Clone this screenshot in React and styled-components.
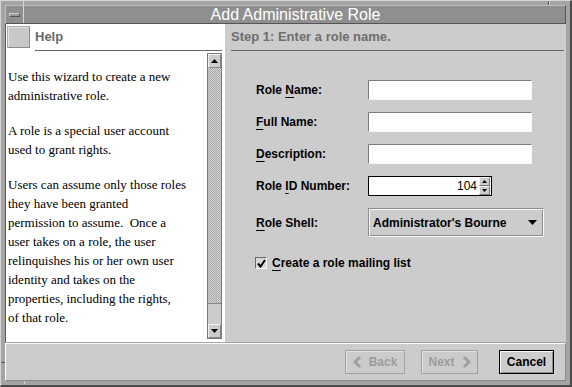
import React from "react";
import styled, { createGlobalStyle } from "styled-components";

const GlobalStyle = createGlobalStyle`
  html, body { margin: 0; padding: 0; background: #a4a4a4; }
  * { box-sizing: border-box; }
`;

const Window = styled.div`
  position: relative;
  width: 572px;
  height: 387px;
  display: flex;
  flex-direction: column;
  background: #a4a4a4;
  border-style: solid;
  border-width: 1px 2px 2px 1px;
  border-color: #d6d6d6 #4a4a4a #4a4a4a #d6d6d6;
  padding: 4px;
  font-family: "Liberation Sans", Arial, sans-serif;
`;

const Notch = styled.div`
  position: absolute;
  background: ${(p) => p.$c || "#d6d6d6"};
  left: ${(p) => p.$x}px;
  top: ${(p) => p.$y}px;
  width: ${(p) => p.$w}px;
  height: ${(p) => p.$h}px;
`;

const TitleBar = styled.div`
  height: 19px;
  display: flex;
  background: #8f8f8f;
  border-style: solid;
  border-width: 1px;
  border-color: #bdbdbd #555 #555 #bdbdbd;
`;

const MinButton = styled.div`
  width: 18px;
  display: flex;
  align-items: center;
  justify-content: center;
  border-right: 1px solid #c4c4c4;
`;

const MinBar = styled.div`
  width: 11px;
  height: 4px;
  background: #9a9a9a;
  border-style: solid;
  border-width: 1px;
  border-color: #d0d0d0 #555 #555 #d0d0d0;
`;

const TitleText = styled.div`
  flex: 1;
  text-align: center;
  color: #fff;
  font-size: 16px;
  line-height: 17px;
  padding-left: 2px;
`;

const Body = styled.div`
  flex: 1;
  display: flex;
  flex-direction: column;
  min-height: 0;
`;

const Main = styled.div`
  flex: 1;
  display: flex;
  min-height: 0;
`;

const HelpPane = styled.div`
  width: 220px;
  display: flex;
  flex-direction: column;
  background: #fff;
  border-left: 1px solid #5a5a5a;
`;

const HelpHeader = styled.div`
  display: flex;
  align-items: flex-start;
  padding: 0 3px 0 1px;
`;

const HelpIcon = styled.div`
  width: 23px;
  height: 22px;
  margin-top: 2px;
  background: #c8c8c8;
  border-style: solid;
  border-width: 1px;
  border-color: #a8a8a8 #8a8a8a #8a8a8a #a8a8a8;
  box-shadow: inset 1px 1px 0 #e4e4e4;
`;

const HelpTitle = styled.div`
  flex: 1;
  margin-left: 5px;
  height: 27px;
  line-height: 26px;
  border-bottom: 1px solid #666;
  font-weight: bold;
  font-size: 13px;
  color: #6a6a6a;
`;

const HelpBody = styled.div`
  flex: 1;
  display: flex;
  min-height: 0;
  padding: 2px 3px 3px 0;
`;

const HelpText = styled.div`
  flex: 1;
  padding: 14px 0 0 2px;
  font-family: "Liberation Serif", "Times New Roman", serif;
  font-size: 13px;
  line-height: 19px;
  color: #000;
  overflow: hidden;
`;

const Para = styled.p`
  margin: 0 0 16px;
  white-space: nowrap;
`;

const Scrollbar = styled.div`
  width: 15px;
  display: flex;
  flex-direction: column;
  border: 1px solid #7a7a7a;
  background: #ccc;
`;

const ScrollButton = styled.div`
  height: 14px;
  display: flex;
  align-items: center;
  justify-content: center;
  background: #ccc;
  border-style: solid;
  border-width: 1px;
  border-color: #f4f4f4 #888 #888 #f4f4f4;
`;

const Track = styled.div`
  flex: 1;
  background: repeating-conic-gradient(#a6a6a6 0% 25%, #d6d6d6 0% 50%) 0 0 / 2px 2px;
  border-left: 1px solid #bbb;
`;

const Thumb = styled.div`
  height: 21px;
  background: #ccc;
  border-top: 1px solid #888;
`;

const RightPane = styled.div`
  flex: 1;
  display: flex;
  flex-direction: column;
  background: #ccc;
  padding: 0 2px 0 6px;
`;

const StepHeader = styled.div`
  height: 27px;
  line-height: 26px;
  border-bottom: 1px solid #666;
  font-weight: bold;
  font-size: 13px;
  color: #6e6e6e;
`;

const Form = styled.div`
  display: grid;
  grid-template-columns: 112px auto;
  row-gap: 12px;
  align-items: center;
  justify-items: start;
  margin: 29px 0 0 25px;
`;

const Label = styled.label`
  font-weight: bold;
  font-size: 12px;
  color: #000;
  white-space: nowrap;
`;

const Mn = styled.span`
  text-decoration: underline;
  text-underline-offset: 3px;
  text-decoration-thickness: 1px;
`;

const TextInput = styled.input`
  width: 164px;
  height: 20px;
  padding: 0;
  margin: 0;
  background: #fff;
  border-style: solid;
  border-width: 1px;
  border-color: #7a7a7a #fafafa #fafafa #7a7a7a;
  outline: none;
`;

const Spinner = styled.div`
  width: 124px;
  height: 20px;
  display: flex;
  align-items: center;
  justify-content: flex-end;
  background: #fff;
  border: 1px solid #000;
  font-size: 12px;
  color: #000;
`;

const SpinValue = styled.span`
  margin-right: 2px;
`;

const SpinButtons = styled.div`
  width: 11px;
  height: 18px;
  display: flex;
  flex-direction: column;
  margin-right: 1px;
`;

const SpinBtn = styled.div`
  flex: 1;
  display: flex;
  align-items: center;
  justify-content: center;
  background: #ccc;
  border-style: solid;
  border-width: 1px;
  border-color: #f4f4f4 #777 #777 #f4f4f4;
`;

const Combo = styled.div`
  width: 176px;
  height: 29px;
  display: flex;
  align-items: center;
  justify-content: space-between;
  padding: 0 6px 0 4px;
  background: #ccc;
  border-style: solid;
  border-width: 1px;
  border-color: #8c8c8c #fafafa #fafafa #8c8c8c;
  box-shadow: inset 1px 1px 0 #f4f4f4, inset -1px -1px 0 #8c8c8c;
  font-weight: bold;
  font-size: 12px;
  color: #000;
`;

const CheckRow = styled.div`
  display: flex;
  align-items: center;
  gap: 5px;
  margin: 19px 0 0 24px;
`;

const CheckBox = styled.div`
  width: 12px;
  height: 12px;
  display: flex;
  align-items: center;
  justify-content: center;
  background: #d8d8d8;
  border-style: solid;
  border-width: 1px;
  border-color: #6a6a6a #fafafa #fafafa #6a6a6a;
`;

const ButtonBar = styled.div`
  height: 38px;
  margin-top: 1px;
  display: flex;
  align-items: center;
  justify-content: flex-end;
  padding-right: 11px;
  background: #ccc;
  border-style: solid;
  border-width: 1px;
  border-color: #fafafa #8a8a8a #8a8a8a #fafafa;
`;

const Button = styled.div`
  width: ${(p) => p.$w}px;
  height: 24px;
  margin-left: ${(p) => p.$ml || 0}px;
  display: flex;
  align-items: center;
  justify-content: center;
  gap: 7px;
  font-weight: bold;
  font-size: 12px;
  color: ${(p) => (p.$disabled ? "#9c9c9c" : "#000")};
  border: 1px solid ${(p) => (p.$disabled ? "#a2a2a2" : "#000")};
  box-shadow: ${(p) =>
    p.$disabled
      ? "inset 1px 1px 0 #e2e2e2"
      : "inset 1px 1px 0 #fafafa, inset -1px -1px 0 #8a8a8a"};
`;

const Tri = ({ dir = "up", w = 7, h = 4 }) => (
  <svg width={w} height={h} viewBox={`0 0 ${w} ${h}`}>
    {dir === "up" ? (
      <polygon points={`0,${h} ${w / 2},0 ${w},${h}`} fill="#000" />
    ) : (
      <polygon points={`0,0 ${w},0 ${w / 2},${h}`} fill="#000" />
    )}
  </svg>
);

const Chevron = ({ left }) => (
  <svg width="9" height="12" viewBox="0 0 9 12">
    <polyline
      points={left ? "7,1 2,6 7,11" : "2,1 7,6 2,11"}
      fill="none"
      stroke="#a0a0a0"
      strokeWidth="3"
    />
  </svg>
);

const Check = () => (
  <svg width="9" height="9" viewBox="0 0 9 9">
    <polyline points="1,4.5 3.5,7.5 8,1" fill="none" stroke="#000" strokeWidth="2" />
  </svg>
);

export default function App() {
  return (
    <>
      <GlobalStyle />
      <Window>
        <Notch $x={22} $y={0} $w={1} $h={22} />
        <Notch $x={547} $y={0} $w={1} $h={4} $c="#555" />
        <Notch $x={548} $y={0} $w={1} $h={4} />
        <Notch $x={0} $y={361} $w={4} $h={1} $c="#555" />
        <Notch $x={23} $y={380} $w={1} $h={3} />
        <TitleBar>
          <MinButton>
            <MinBar />
          </MinButton>
          <TitleText>Add Administrative Role</TitleText>
        </TitleBar>
        <Body>
          <Main>
            <HelpPane>
              <HelpHeader>
                <HelpIcon />
                <HelpTitle>Help</HelpTitle>
              </HelpHeader>
              <HelpBody>
                <HelpText>
                  <Para>
                    Use this wizard to create a new
                    <br />
                    administrative role.
                  </Para>
                  <Para>
                    A role is a special user account
                    <br />
                    used to grant rights.
                  </Para>
                  <Para>
                    Users can assume only those roles
                    <br />
                    they have been granted
                    <br />
                    permission to assume.&nbsp; Once a
                    <br />
                    user takes on a role, the user
                    <br />
                    relinquishes his or her own user
                    <br />
                    identity and takes on the
                    <br />
                    properties, including the rights,
                    <br />
                    of that role.
                  </Para>
                </HelpText>
                <Scrollbar>
                  <ScrollButton>
                    <Tri dir="up" />
                  </ScrollButton>
                  <Track />
                  <Thumb />
                  <ScrollButton>
                    <Tri dir="down" />
                  </ScrollButton>
                </Scrollbar>
              </HelpBody>
            </HelpPane>
            <RightPane>
              <StepHeader>Step 1: Enter a role name.</StepHeader>
              <Form>
                <Label>
                  Role <Mn>N</Mn>ame:
                </Label>
                <TextInput />
                <Label>
                  <Mn>F</Mn>ull Name:
                </Label>
                <TextInput />
                <Label>
                  <Mn>D</Mn>escription:
                </Label>
                <TextInput />
                <Label>
                  Role <Mn>I</Mn>D Number:
                </Label>
                <Spinner>
                  <SpinValue>104</SpinValue>
                  <SpinButtons>
                    <SpinBtn>
                      <Tri dir="up" w={5} h={3} />
                    </SpinBtn>
                    <SpinBtn>
                      <Tri dir="down" w={5} h={3} />
                    </SpinBtn>
                  </SpinButtons>
                </Spinner>
                <Label>
                  <Mn>R</Mn>ole Shell:
                </Label>
                <Combo>
                  <span>Administrator's Bourne</span>
                  <Tri dir="down" w={9} h={5} />
                </Combo>
              </Form>
              <CheckRow>
                <CheckBox>
                  <Check />
                </CheckBox>
                <Label>
                  <Mn>C</Mn>reate a role mailing list
                </Label>
              </CheckRow>
            </RightPane>
          </Main>
          <ButtonBar>
            <Button $w={60} $disabled>
              <Chevron left />
              Back
            </Button>
            <Button $w={57} $ml={16} $disabled>
              Next
              <Chevron />
            </Button>
            <Button $w={55} $ml={21}>
              Cancel
            </Button>
          </ButtonBar>
        </Body>
      </Window>
    </>
  );
}
